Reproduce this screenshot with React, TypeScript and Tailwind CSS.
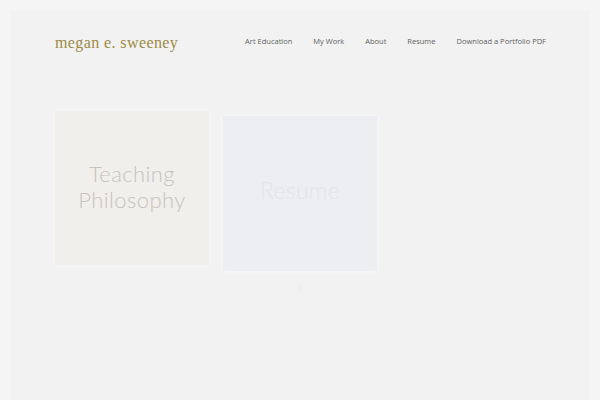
import React from 'react';

const navItems = ['Art Education', 'My Work', 'About', 'Resume', 'Download a Portfolio PDF'];

const App = () => {
  return (
    <div className="h-[400px] w-[600px] overflow-hidden bg-[#f5f5f5] px-[10px] pt-[10px]">
      <div className="h-full bg-[#f2f2f2] px-[45px]">
        {/* Header */}
        <header className="flex items-center justify-between pt-[21px]">
          <div
            className="text-[16px] tracking-[0.4px] text-[#9b8a45]"
            style={{ fontFamily: '"Liberation Serif", serif' }}
          >
            megan e. sweeney
          </div>
          <nav className="mr-[-1px] flex items-center gap-[21px] pb-[2px]">
            {navItems.map((item) => (
              <span
                key={item}
                className="text-[7.5px] text-[#5f5f5f]"
                style={{ fontFamily: '"Open Sans", sans-serif' }}
              >
                {item}
              </span>
            ))}
          </nav>
        </header>

        {/* Cards */}
        <div className="mt-[56px] flex items-start gap-[14px]">
          <div className="flex h-[154px] w-[154px] items-center justify-center bg-[#f0efec] shadow-[0_0_5px_rgba(255,255,255,0.6)]">
            <div
              className="mb-[2px] text-center text-[22px] font-light tracking-[0.4px] text-[#c6c3be]"
              style={{ fontFamily: 'Lato, sans-serif' }}
            >
              <p className="leading-[26px]">Teaching</p>
              <p className="leading-[26px]">Philosophy</p>
            </div>
          </div>
          <div className="flex flex-col items-center">
            <div className="mt-[5px] flex h-[155px] w-[154px] items-center justify-center bg-[#edeef1] shadow-[0_0_5px_rgba(255,255,255,0.6)]">
              <p
                className="mb-[6px] text-[23px] font-light tracking-[0.3px] text-[#e3e4e7]"
                style={{ fontFamily: 'Lato, sans-serif' }}
              >
                Resume
              </p>
            </div>
            <div className="mt-[14px] h-[8px] w-[5px] bg-[#efefef]" />
          </div>
        </div>
      </div>
    </div>
  );
};

export default App;
